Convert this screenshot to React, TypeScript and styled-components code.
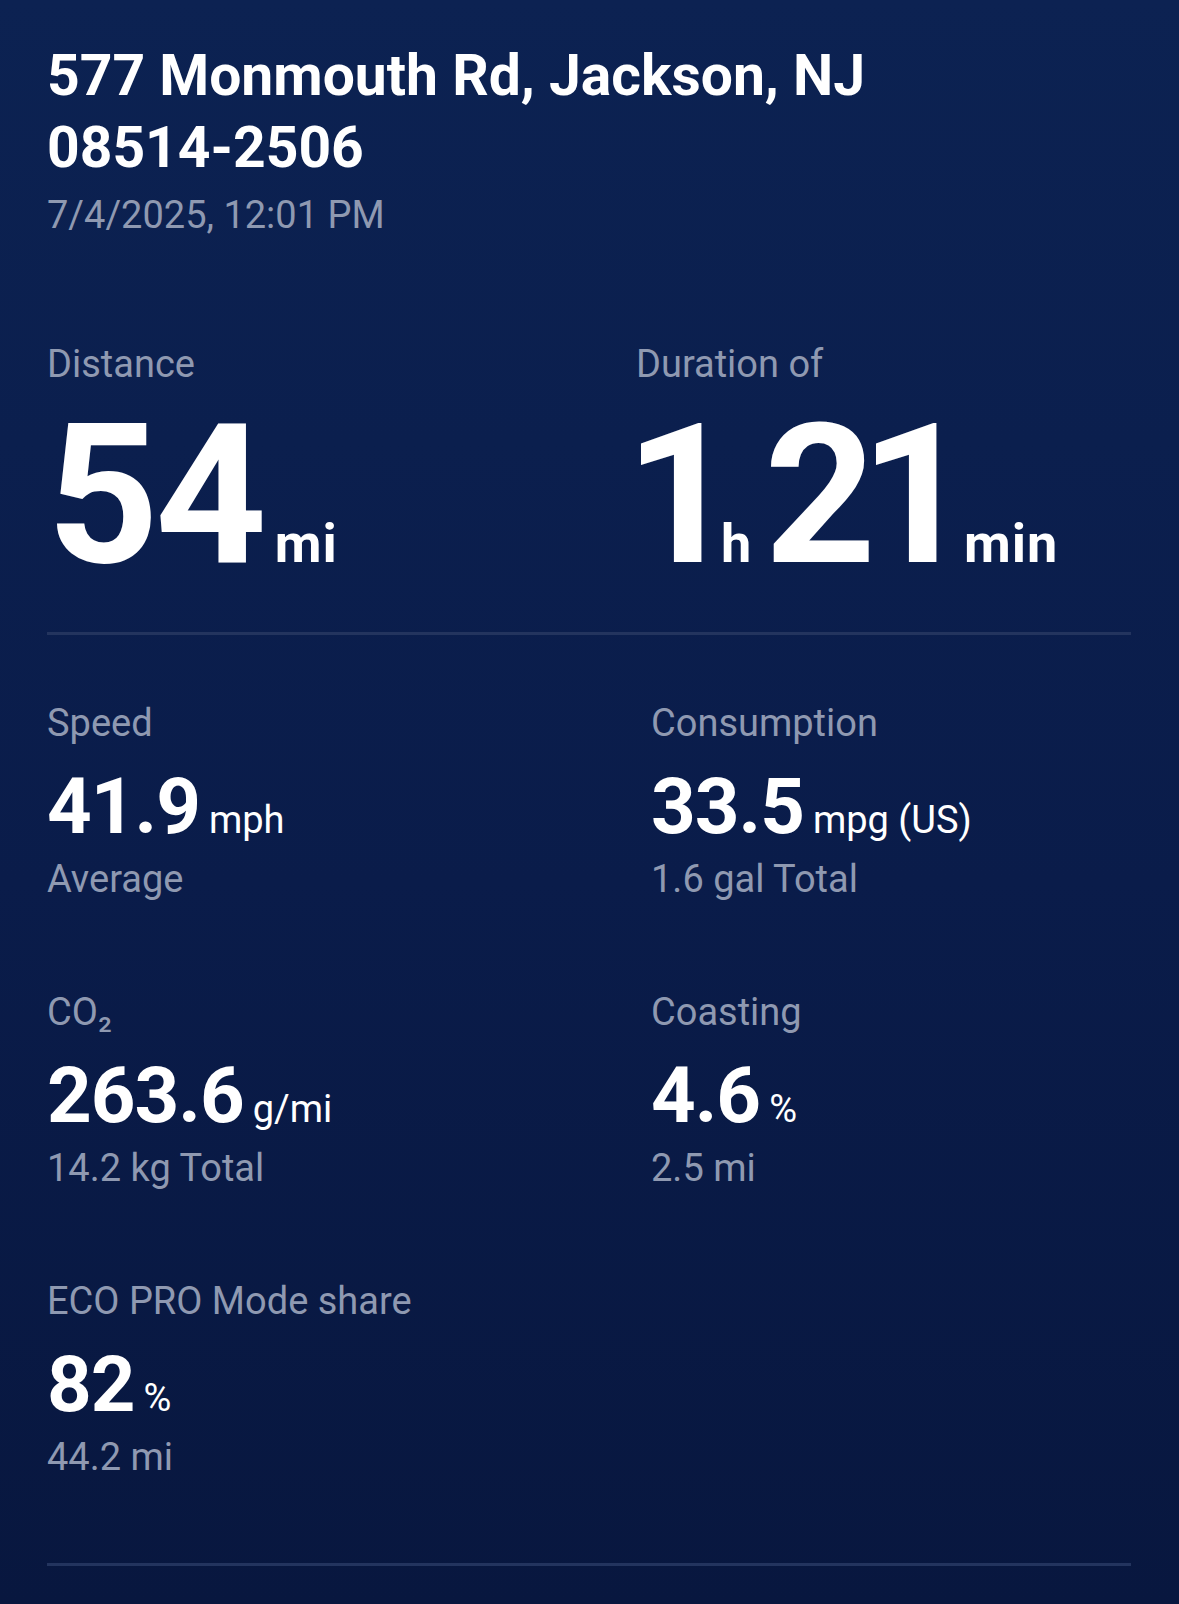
import styled, { createGlobalStyle } from 'styled-components';

const GlobalStyle = createGlobalStyle`
  html, body {
    margin: 0;
    padding: 0;
  }

  body {
    background: linear-gradient(180deg, #0c2252 0%, #0a1c4a 55%, #08173f 100%);
    font-family: Roboto, 'Liberation Sans', sans-serif;
    color: #ffffff;
    min-height: 100vh;
  }
`;

const stats = [
  { label: 'Speed', value: '41.9', unit: 'mph', sub: 'Average' },
  { label: 'Consumption', value: '33.5', unit: 'mpg (US)', sub: '1.6 gal Total' },
  { label: 'CO₂', value: '263.6', unit: 'g/mi', sub: '14.2 kg Total' },
  { label: 'Coasting', value: '4.6', unit: '%', sub: '2.5 mi' },
  { label: 'ECO PRO Mode share', value: '82', unit: '%', sub: '44.2 mi' },
];

const App = () => {
  return (
    <>
      <GlobalStyle />
      <Page>
        <header>
          <Title>
            577 Monmouth Rd, Jackson, NJ
            <br />
            08514-2506
          </Title>
          <DateLine>7/4/2025, 12:01 PM</DateLine>
        </header>

        <HeroRow>
          <div>
            <Label>Distance</Label>
            <HeroLine>
              <HeroValue>54</HeroValue>
              <HeroUnit $offset={12}>mi</HeroUnit>
            </HeroLine>
          </div>
          <div>
            <Label>Duration of</Label>
            <HeroLine>
              <HeroValue $tight $offset={-11}>1</HeroValue>
              <HeroUnit $offset={0}>h</HeroUnit>
              <HeroValue $tight $offset={12}>21</HeroValue>
              <HeroUnit $offset={8}>min</HeroUnit>
            </HeroLine>
          </div>
        </HeroRow>

        <StatGrid>
          {stats.map(({ label, value, unit, sub }) => (
            <div key={label}>
              <Label>{label}</Label>
              <ValueLine>
                <Value>{value}</Value>
                <Unit>{unit}</Unit>
              </ValueLine>
              <Label>{sub}</Label>
            </div>
          ))}
        </StatGrid>
      </Page>
    </>
  );
};

export default App;

const Page = styled.main`
  box-sizing: border-box;
  min-height: 100vh;
  padding: 40px 48px 0 47px;
`;

const Title = styled.h1`
  margin: 0;
  font-size: 57px;
  line-height: 72px;
  font-weight: 700;
  color: #ffffff;
`;

const DateLine = styled.p`
  margin: 8px 0 0;
  font-size: 38px;
  line-height: 46px;
  color: #8f99b1;
`;

const HeroRow = styled.section`
  display: grid;
  grid-template-columns: 589px 1fr;
  margin-top: 103px;
  padding-bottom: 39px;
  border-bottom: 3px solid #23345e;
`;

const Label = styled.div`
  font-size: 38px;
  line-height: 46px;
  font-weight: 400;
  color: #8f99b1;
  white-space: nowrap;
`;

const HeroLine = styled.div`
  display: flex;
  align-items: baseline;
  margin-top: 11px;
`;

const HeroValue = styled.span<{ $tight?: boolean; $offset?: number }>`
  font-size: 195px;
  line-height: 195px;
  font-weight: 700;
  letter-spacing: ${({ $tight }) => ($tight ? '-16px' : '-4px')};
  margin-left: ${({ $offset = 0 }) => $offset}px;
`;

const HeroUnit = styled.span<{ $offset: number }>`
  font-size: 54px;
  line-height: 54px;
  font-weight: 700;
  letter-spacing: 1px;
  margin-left: ${({ $offset }) => $offset}px;
`;

const StatGrid = styled.section`
  display: grid;
  grid-template-columns: 604px 1fr;
  row-gap: 87px;
  padding: 65px 0 83px;
  border-bottom: 3px solid #23345e;
`;

const ValueLine = styled.div`
  display: flex;
  align-items: baseline;
  margin: 16px 0 4px;
`;

const Value = styled.span`
  font-size: 78px;
  line-height: 90px;
  font-weight: 700;
  letter-spacing: -1px;
`;

const Unit = styled.span`
  font-size: 38px;
  line-height: 38px;
  font-weight: 400;
  margin-left: 9px;
`;
